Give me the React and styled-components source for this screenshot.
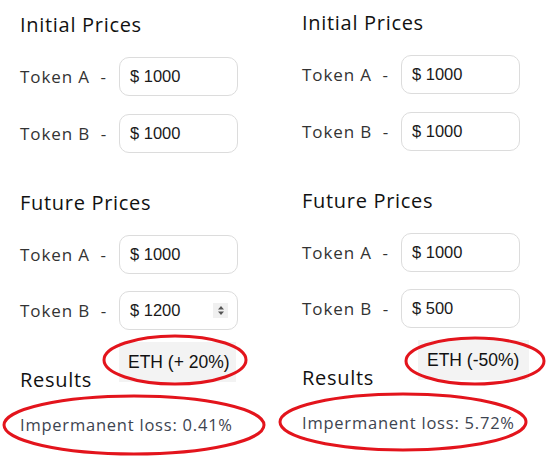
import React from "react";
import styled, { createGlobalStyle } from "styled-components";

const Global = createGlobalStyle`
  html, body { margin: 0; padding: 0; background: #fff; }
  body { font-family: "Open Sans", "Noto Sans", sans-serif; color: #222; }
`;

const Page = styled.div`
  position: relative;
  width: 553px;
  height: 468px;
  display: grid;
  grid-template-columns: 282px 271px;
  overflow: hidden;
`;

const Column = styled.div`
  display: flex;
  flex-direction: column;
  padding-left: 20px;
  padding-top: ${(p) => p.$top}px;
`;

const Title = styled.h2`
  margin: 0;
  font-family: "Open Sans", sans-serif;
  font-size: 20px;
  font-weight: 500;
  line-height: 24px;
  color: #111;
  letter-spacing: 0.7px;
  margin-top: ${(p) => p.$mt || 0}px;
`;

const Row = styled.div`
  display: flex;
  align-items: center;
  margin-top: ${(p) => p.$mt}px;
`;

const Label = styled.span`
  width: 99px;
  font-size: 17px;
  color: #333;
  letter-spacing: 0.9px;
  white-space: pre;
`;

const PriceBox = styled.div`
  box-sizing: border-box;
  width: 119px;
  height: 39px;
  border: 1px solid #dcdcdc;
  border-radius: 10px;
  display: flex;
  align-items: center;
  padding: 0 9px 0 10px;
  font-family: "Liberation Sans", Arial, sans-serif;
  font-size: 16.5px;
  color: #1a1a1a;
  justify-content: space-between;
`;

const Spinner = styled.span`
  width: 15px;
  height: 15px;
  background: #f0f0f0;
  display: flex;
  align-items: center;
  justify-content: center;
`;

const ResultsRow = styled.div`
  display: flex;
  align-items: flex-end;
  margin-top: 12px;
`;

const ResultsTitle = styled(Title)`
  width: 99px;
  flex: none;
  margin-bottom: -10px;
`;

const Tag = styled.div`
  box-sizing: border-box;
  height: 40px;
  background: #f3f3f3;
  display: flex;
  align-items: center;
  padding: 0 ${(p) => p.$pr}px 0 ${(p) => p.$pl}px;
  margin-left: ${(p) => p.$ml}px;
  font-family: "Liberation Sans", Arial, sans-serif;
  font-size: 17.5px;
  color: #111;
  white-space: pre;
`;

const Loss = styled.div`
  margin-top: ${(p) => p.$mt}px;
  font-size: 16.5px;
  color: #3d4450;
  letter-spacing: 0.78px;
`;

const Marks = styled.svg`
  position: absolute;
  left: 0;
  top: 0;
  pointer-events: none;
`;

function Price({ value, spin }) {
  return (
    <PriceBox>
      <span>$ {value}</span>
      {spin && (
        <Spinner>
          <svg width="8" height="11" viewBox="0 0 8 11">
            <path d="M4 1 L7 4.5 H1 Z M4 10 L7 6.5 H1 Z" fill="#555" />
          </svg>
        </Spinner>
      )}
    </PriceBox>
  );
}

function Calculator({ top, futureB, spin, tag, tagProps, loss }) {
  return (
    <Column $top={top}>
      <Title>Initial Prices</Title>
      <Row $mt={20}>
        <Label>Token A  -</Label>
        <Price value="1000" />
      </Row>
      <Row $mt={18}>
        <Label>Token B  -</Label>
        <Price value="1000" />
      </Row>
      <Title $mt={38}>Future Prices</Title>
      <Row $mt={20}>
        <Label>Token A  -</Label>
        <Price value="1000" />
      </Row>
      <Row $mt={17}>
        <Label>Token B  -</Label>
        <Price value={futureB} spin={spin} />
      </Row>
      <ResultsRow>
        <ResultsTitle>Results</ResultsTitle>
        <Tag {...tagProps}>{tag}</Tag>
      </ResultsRow>
      <Loss $mt={31}>Impermanent loss: {loss}</Loss>
    </Column>
  );
}

export default function App() {
  return (
    <>
      <Global />
      <Page>
        <Calculator
          top={13}
          futureB="1200"
          spin
          tag="ETH (+ 20%)"
          tagProps={{ $pl: 9, $pr: 6, $ml: 0 }}
          loss="0.41%"
        />
        <Calculator
          top={11}
          futureB="500"
          tag="ETH (-50%)"
          tagProps={{ $pl: 9, $pr: 10, $ml: 17 }}
          loss="5.72%"
        />
        <Marks width="553" height="468" viewBox="0 0 553 468">
          <g fill="none" stroke="#e3141c" strokeWidth="3">
            <ellipse cx="175" cy="360" rx="71" ry="24" />
            <ellipse cx="134" cy="425" rx="130" ry="29" />
            <ellipse cx="475" cy="361" rx="69" ry="23" />
            <ellipse cx="403" cy="422" rx="123" ry="28" />
          </g>
        </Marks>
      </Page>
    </>
  );
}
